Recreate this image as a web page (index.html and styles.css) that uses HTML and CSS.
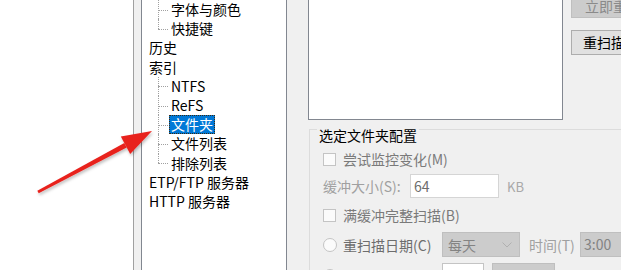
FILE: index.html
```html
<!DOCTYPE html>
<html lang="zh-CN">
<head>
<meta charset="utf-8">
<title>选项</title>
<link rel="stylesheet" href="styles.css">
</head>
<body>
<div class="screen">
  <div class="outside"></div>
  <div class="dialog">
    <div class="tree">
      <ul class="kids kids-top">
        <li><span class="lbl">字体与颜色</span></li>
        <li><span class="lbl">快捷键</span></li>
      </ul>
      <ul class="roots">
        <li><span class="root-lbl">历史</span></li>
        <li><span class="root-lbl">索引</span>
          <ul class="kids">
            <li><span class="lbl">NTFS</span></li>
            <li><span class="lbl">ReFS</span></li>
            <li><span class="lbl selected">文件夹</span></li>
            <li><span class="lbl">文件列表</span></li>
            <li><span class="lbl">排除列表</span></li>
          </ul>
        </li>
        <li><span class="root-lbl">ETP/FTP 服务器</span></li>
        <li><span class="root-lbl">HTTP 服务器</span></li>
      </ul>
    </div>
    <div class="content">
      <div class="top">
        <div class="listbox"></div>
        <div class="buttons">
          <button class="btn btn-disabled" disabled>立即重扫描</button>
          <button class="btn btn-main">重扫描</button>
        </div>
      </div>
      <fieldset class="group">
        <legend class="group-title">选定文件夹配置</legend>
        <div class="row r1">
          <span class="check"></span><span class="txt">尝试监控变化(M)</span>
        </div>
        <div class="row r2">
          <span class="field-lbl">缓冲大小(S):</span>
          <span class="input">64</span>
          <span class="unit">KB</span>
        </div>
        <div class="row r3">
          <span class="check"></span><span class="txt">满缓冲完整扫描(B)</span>
        </div>
        <div class="row r4">
          <span class="radio"></span><span class="txt txt-dark radio-lbl">重扫描日期(C)</span>
          <span class="combo"><span class="combo-text">每天</span>
            <svg class="chev" width="10" height="6" viewBox="0 0 10 6"><path d="M0.5 0.5 L5 5 L9.5 0.5" fill="none" stroke="#b0b0b0" stroke-width="1"/></svg>
          </span>
          <span class="time-lbl">时间(T)</span>
          <span class="time">3:00</span>
        </div>
        <div class="row r5">
          <span class="radio"></span><span class="radio-lbl"></span>
          <span class="small-input"></span>
          <span class="small-combo"></span>
        </div>
      </fieldset>
    </div>
  </div>
  <svg class="arrow" width="621" height="270" viewBox="0 0 621 270">
    <defs>
      <filter id="sh" x="-20%" y="-20%" width="140%" height="140%">
        <feDropShadow dx="1" dy="2" stdDeviation="1.5" flood-color="#000" flood-opacity="0.25"/>
      </filter>
    </defs>
    <g filter="url(#sh)" fill="#e8231e">
      <polygon points="38.7,193.3 37.3,190.7 124.3,143 126.7,147.4"/>
      <polygon points="152,131 120.8,136.4 130.2,154"/>
    </g>
  </svg>
</div>
</body>
</html>
```
FILE: styles.css
```css
html, body {
  margin: 0;
  padding: 0;
  background: #fff;
}

body {
  font-family: "Noto Sans CJK SC", "Noto Sans", sans-serif;
  font-size: 14px;
  color: #000;
}

.screen {
  position: relative;
  width: 621px;
  height: 270px;
  display: flex;
  overflow: hidden;
  background: #fff;
}

.outside {
  flex: 0 0 133px;
  background: #fff;
}

.dialog {
  flex: 1;
  min-width: 0;
  display: flex;
  background: #f0f0f0;
  border-left: 1px solid #a0a0a0;
  padding-left: 7px;
}

/* ---------- tree ---------- */
.tree {
  flex: 0 0 146px;
  box-sizing: border-box;
  height: 290px;
  background: #fff;
  border: 1px solid #828790;
  border-top: 0;
  padding-left: 7px;
}

.tree ul {
  list-style: none;
  margin: 0;
  padding: 0;
}

.tree li {
  line-height: 19.2px;
  white-space: nowrap;
}

.root-lbl {
  display: inline-block;
  height: 19.2px;
}

.kids {
  margin-left: 9px !important;
}

.kids > li {
  position: relative;
  padding-left: 11px;
  height: 19.2px;
}

.kids > li::before {
  content: "";
  position: absolute;
  left: 0;
  top: 50%;
  width: 10px;
  border-top: 1px dotted #a0a0a0;
}

.kids > li::after {
  content: "";
  position: absolute;
  left: 0;
  top: 0;
  bottom: 0;
  border-left: 1px dotted #a0a0a0;
}

.kids > li:last-child::after {
  bottom: 50%;
}

.lbl {
  display: inline-block;
  box-sizing: border-box;
  height: 19.2px;
  padding: 0 1px;
  border: 1px solid transparent;
  line-height: 17px;
}

.lbl.selected {
  background: #0078d7;
  color: #fff;
  border: 1px dotted #3a2a10;
}

/* ---------- right content ---------- */
.content {
  flex: 1;
  min-width: 0;
  margin-left: 21px;
  display: flex;
  flex-direction: column;
}

.top {
  flex: none;
  display: flex;
  height: 120px;
}

.listbox {
  flex: 0 0 255px;
  box-sizing: border-box;
  height: 120px;
  background: #fff;
  border: 1px solid #828790;
  border-top: 0;
}

.buttons {
  flex: none;
  margin-left: 8px;
  display: flex;
  flex-direction: column;
}

.btn {
  flex: none;
  width: 90px;
  box-sizing: border-box;
  font: inherit;
  text-align: left;
  white-space: nowrap;
  overflow: hidden;
  margin: 0;
}

.btn-disabled {
  margin-top: -6px;
  height: 24px;
  padding: 0 0 0 13px;
  line-height: 22px;
  background: #cccccc;
  border: 1px solid #bfbfbf;
  color: #8a8a8a;
}

.btn-main {
  margin-top: 12px;
  height: 25px;
  padding: 0 0 0 11px;
  line-height: 23px;
  background: #e1e1e1;
  border: 1px solid #adadad;
  color: #000;
}

/* ---------- group box ---------- */
.group {
  flex: none;
  margin: -4px 0 0 1px;
  width: 400px;
  min-width: 0;
  border: 1px solid #dcdcdc;
  padding: 0 0 0 13px;
}

.group-title {
  margin-left: -6px;
  padding: 12px 2px 0;
  line-height: 15px;
  color: #000;
}

.row {
  display: flex;
  align-items: center;
  color: #7a7a7a;
  white-space: nowrap;
}

.r1 { height: 26px; margin-top: 3px; }
.r2 { height: 28px; }
.r3 { height: 30px; }
.r4 { height: 29px; }
.r5 { height: 33px; }

.check {
  flex: none;
  width: 13px;
  height: 13px;
  box-sizing: border-box;
  border: 1px solid #c4c4c4;
  background: #fbfbfb;
  margin-right: 7px;
}

.radio {
  flex: none;
  width: 14px;
  height: 14px;
  box-sizing: border-box;
  border: 1px solid #c4c4c4;
  border-radius: 50%;
  background: #fbfbfb;
  margin-right: 6px;
}

.txt-dark {
  color: #6d6d6d;
}

.field-lbl {
  width: 87px;
  color: #a0a0a0;
}

.input {
  box-sizing: border-box;
  width: 89px;
  height: 24px;
  border: 1px solid #d5d5d5;
  background: #fff;
  padding-left: 3px;
  line-height: 22px;
  color: #6d6d6d;
}

.unit {
  margin-left: 8px;
  color: #a8a8a8;
  font-size: 13px;
}

.radio-lbl {
  width: 99px;
}

.combo {
  box-sizing: border-box;
  width: 78px;
  height: 25px;
  display: flex;
  align-items: center;
  justify-content: space-between;
  background: #cccccc;
  border: 1px solid #bfbfbf;
  padding: 0 7px 0 5px;
  color: #838383;
}

.time-lbl {
  margin-left: 9px;
  width: 51px;
  color: #a0a0a0;
}

.time {
  box-sizing: border-box;
  width: 60px;
  height: 25px;
  background: #cccccc;
  border: 1px solid #bfbfbf;
  padding-left: 3px;
  line-height: 23px;
  color: #838383;
}

.small-input {
  box-sizing: border-box;
  width: 42px;
  height: 25px;
  background: #fff;
  border: 1px solid #c4c4c4;
}

.small-combo {
  box-sizing: border-box;
  width: 63px;
  height: 25px;
  margin-left: 8px;
  background: #cccccc;
  border: 1px solid #bfbfbf;
}

/* ---------- annotation arrow ---------- */
.arrow {
  position: absolute;
  left: 0;
  top: 0;
  pointer-events: none;
}
```
